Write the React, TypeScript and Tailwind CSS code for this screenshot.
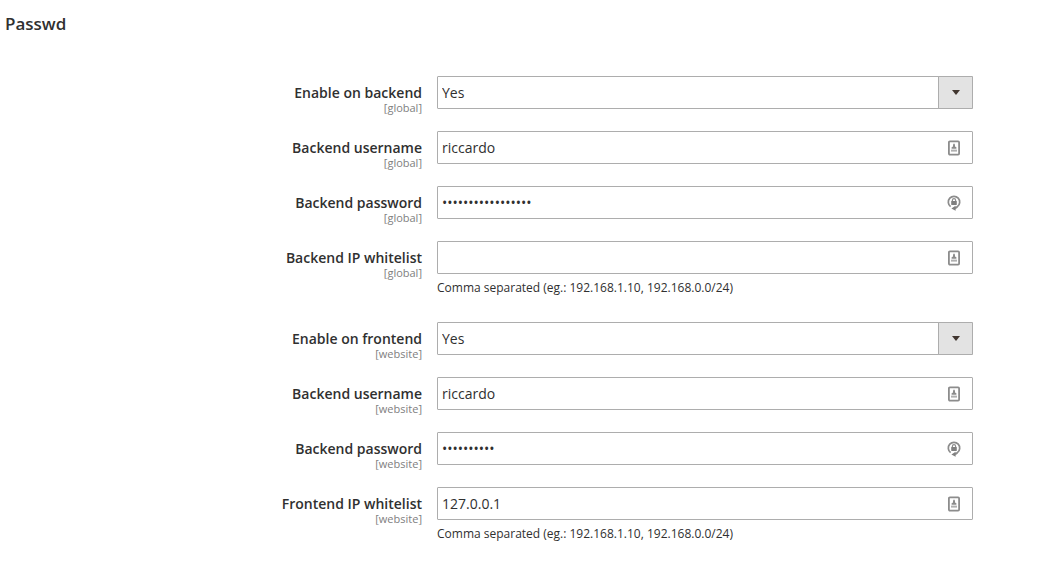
import { useId, useState } from 'react';

type FieldKind = 'select' | 'text' | 'password';

interface FieldProps {
  label: string;
  scope: string;
  kind: FieldKind;
  initial: string;
  note?: string;
}

const fields: FieldProps[] = [
  { label: 'Enable on backend', scope: '[global]', kind: 'select', initial: 'Yes' },
  { label: 'Backend username', scope: '[global]', kind: 'text', initial: 'riccardo' },
  { label: 'Backend password', scope: '[global]', kind: 'password', initial: 'abcdefghijklmnopq' },
  {
    label: 'Backend IP whitelist',
    scope: '[global]',
    kind: 'text',
    initial: '',
    note: 'Comma separated (eg.: 192.168.1.10, 192.168.0.0/24)',
  },
  { label: 'Enable on frontend', scope: '[website]', kind: 'select', initial: 'Yes' },
  { label: 'Backend username', scope: '[website]', kind: 'text', initial: 'riccardo' },
  { label: 'Backend password', scope: '[website]', kind: 'password', initial: 'abcdefghij' },
  {
    label: 'Frontend IP whitelist',
    scope: '[website]',
    kind: 'text',
    initial: '127.0.0.1',
    note: 'Comma separated (eg.: 192.168.1.10, 192.168.0.0/24)',
  },
];

function IdentityIcon() {
  return (
    <svg aria-hidden="true" viewBox="0 0 16 16" className="size-4" fill="none">
      <rect x="2.9" y="1.4" width="10.2" height="13.2" rx="1" stroke="#8c8c8c" strokeWidth="1.8" />
      <path d="M8 3.2 9 4.8v1.6l1.4.8V8.8H5.6V7.2L7 6.4V4.8z" fill="#8c8c8c" />
      <path d="M5 10.6h6" stroke="#b0b0b0" strokeWidth="2" />
    </svg>
  );
}

function LockCycleIcon() {
  return (
    <svg aria-hidden="true" viewBox="0 0 16 16" className="size-4" fill="none">
      <path d="M4.6 11.6A5.7 5.7 0 1 1 11.4 11.6Q10.4 12.8 8.8 13.2" stroke="#8c8c8c" strokeWidth="1.7" />
      <path d="M9.6 10.7v5.1L5.4 13.5z" fill="#808080" />
      <path d="M6.4 6.6V5.2a1.6 1.6 0 0 1 3.2 0v1.4" stroke="#8c8c8c" strokeWidth="1.2" />
      <rect x="5.2" y="5.9" width="5.6" height="4" rx="0.4" fill="#808080" />
    </svg>
  );
}

const control =
  'block h-[33px] w-full appearance-none rounded-[1px] border border-[#adadad] bg-white pl-1 text-sm text-[#303030] outline-none focus:border-[#007bdb]';

function Field({ label, scope, kind, initial, note }: FieldProps) {
  const id = useId();
  const [value, setValue] = useState(initial);

  return (
    <div className="grid grid-cols-[minmax(0,422fr)_minmax(0,536fr)] gap-[15px]">
      <label htmlFor={id} className="flex flex-col pt-2 text-right">
        <span className="text-sm leading-[18px] font-semibold">{label}</span>
        <span className="text-[11px] leading-3 text-[#808080]">{scope}</span>
      </label>
      <div>
        <div className="relative">
          {kind === 'select' ? (
            <select
              id={id}
              value={value}
              onChange={(e) => setValue(e.target.value)}
              className={`${control} pr-9`}
            >
              <option>Yes</option>
              <option>No</option>
            </select>
          ) : (
            <input
              id={id}
              type={kind}
              value={value}
              onChange={(e) => setValue(e.target.value)}
              className={`${control} pr-8`}
            />
          )}
          {kind === 'select' ? (
            <span className="pointer-events-none absolute inset-y-0 right-0 flex w-[35px] items-center justify-center rounded-r-[1px] border border-[#adadad] bg-[#e3e3e3]">
              <svg aria-hidden="true" viewBox="0 0 8 5" className="h-[5px] w-2">
                <path d="M0 0h8L4 5z" fill="#41362f" />
              </svg>
            </span>
          ) : (
            <span className="pointer-events-none absolute inset-y-0 right-[11px] flex items-center">
              {kind === 'password' ? <LockCycleIcon /> : <IdentityIcon />}
            </span>
          )}
        </div>
        {note && <p className="pt-1 pb-[7px] text-xs leading-5">{note}</p>}
      </div>
    </div>
  );
}

export default function App() {
  return (
    <main className="bg-white font-['Open_Sans',sans-serif] text-[#303030]">
      <h1 className="pt-3 pl-[5px] text-[17px] leading-6 font-semibold">Passwd</h1>
      <form className="flex flex-col gap-[17px] pt-10 pr-[72px]" onSubmit={(e) => e.preventDefault()}>
        {fields.map((field) => (
          <Field key={`${field.scope}${field.label}`} {...field} />
        ))}
      </form>
    </main>
  );
}
